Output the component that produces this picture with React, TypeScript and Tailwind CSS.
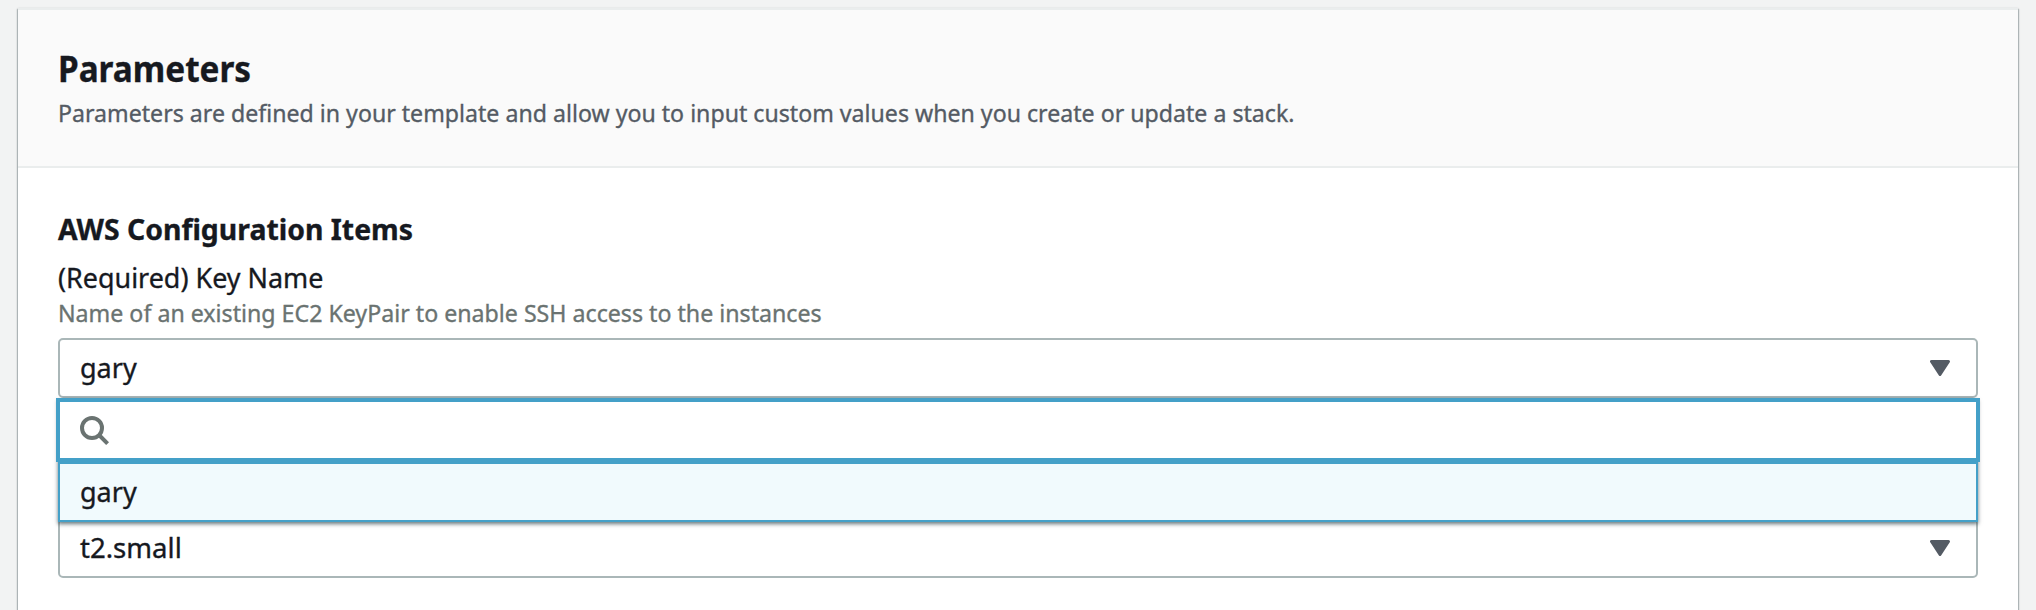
import type { ReactNode } from "react";

function Caret() {
  return (
    <svg width="20" height="16" viewBox="0 0 20 16" className="shrink-0">
      <path d="M1.5 1.5h17L10 14.5z" fill="#545b64" stroke="#545b64" strokeWidth="3" strokeLinejoin="round" />
    </svg>
  );
}

function SearchIcon() {
  return (
    <svg width="30" height="30" viewBox="0 0 30 30" fill="none" stroke="#6a7371" strokeWidth="4">
      <circle cx="12" cy="13" r="10" />
      <path d="M19 20l8.6 8.6" />
    </svg>
  );
}

function Select({ children }: { children: ReactNode }) {
  return (
    <div className="flex h-[60px] items-center justify-between rounded-[5px] border-2 border-[#aab7b8] bg-white pr-[26px] pl-5">
      {children}
      <Caret />
    </div>
  );
}

export default function App() {
  return (
    <div className="h-[610px] overflow-hidden bg-[#f2f3f3] px-[18px] pt-2 font-['Noto_Sans',sans-serif] text-[#16191f] [-webkit-text-stroke:0.35px]">
      <section className="h-[640px] border-t-2 border-[#eaeded] bg-white shadow-[0_1px_2px_0_rgba(0,28,36,0.5),1px_1px_1px_0_rgba(0,28,36,0.15),-1px_1px_1px_0_rgba(0,28,36,0.15)]">
        <header className="flex h-[158px] flex-col items-start gap-[5px] border-b-2 border-[#eaeded] bg-[#fafafa] px-10 pt-9">
          <h1 className="origin-left scale-x-[.938] text-[35.5px] leading-[44px] font-bold whitespace-nowrap">Parameters</h1>
          <p className="origin-left scale-x-[.9643] text-[24px] leading-9 whitespace-nowrap text-[#545b64]">
            Parameters are defined in your template and allow you to input custom values when you create or update a stack.
          </p>
        </header>
        <div className="flex flex-col px-10 pt-[43px]">
          <h2 className="origin-left scale-x-[.979] self-start text-[29px] leading-9 font-bold whitespace-nowrap">AWS Configuration Items</h2>
          <label className="mt-3 origin-left scale-x-[.961] self-start text-[28px] leading-9 whitespace-nowrap">(Required) Key Name</label>
          <p className="mt-0.5 mb-[9px] origin-left scale-x-[.9655] self-start text-[24px] leading-8 whitespace-nowrap text-[#6a7371]">
            Name of an existing EC2 KeyPair to enable SSH access to the instances
          </p>
          <div className="relative z-10">
            <Select>
              <span className="-mt-0.5 origin-left scale-x-[.965] text-[28px] leading-9">gary</span>
            </Select>
            <div className="absolute top-[60px] right-0 left-0 shadow-[0_2px_4px_0_rgba(0,28,36,0.6)]">
              <div className="relative z-10 -mx-0.5 flex h-16 items-center border-4 border-[#44a0c8] bg-white pl-5">
                <SearchIcon />
              </div>
              <div className="flex h-[60px] items-center border-2 border-[#44a0c8] bg-[#f1fafd] pl-5">
                <span className="-mt-0.5 origin-left scale-x-[.965] text-[28px] leading-9">gary</span>
              </div>
            </div>
          </div>
          <div className="mt-[120px]">
            <Select>
              <span className="-mt-0.5 origin-left scale-x-[.985] text-[28px] leading-9">t2.small</span>
            </Select>
          </div>
        </div>
      </section>
    </div>
  );
}
